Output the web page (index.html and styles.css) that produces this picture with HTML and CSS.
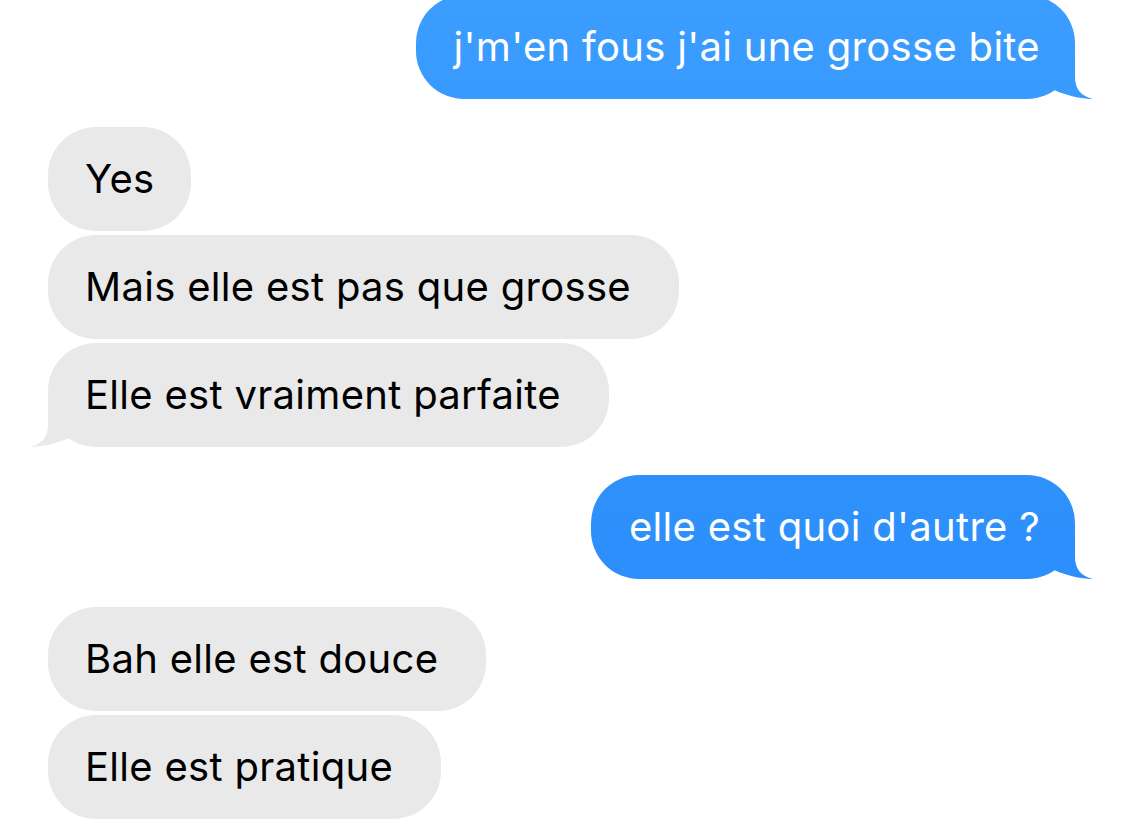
FILE: index.html
```html
<!DOCTYPE html>
<html lang="fr">
<head>
<meta charset="utf-8">
<title>Messages</title>
<link rel="stylesheet" href="styles.css">
</head>
<body>
<main class="thread">
  <div class="group">
    <div class="bubble sent tailed">j'm'en fous j'ai une grosse bite<span class="tail"></span></div>
  </div>
  <div class="group">
    <div class="bubble received short">Yes</div>
    <div class="bubble received">Mais elle est pas que grosse</div>
    <div class="bubble received tailed">Elle est vraiment parfaite<span class="tail"></span></div>
  </div>
  <div class="group">
    <div class="bubble sent tailed">elle est quoi d'autre ?<span class="tail"></span></div>
  </div>
  <div class="group">
    <div class="bubble received">Bah elle est douce</div>
    <div class="bubble received">Elle est pratique</div>
  </div>
</main>
</body>
</html>
```

FILE: styles.css
```css
html, body {
  margin: 0;
  padding: 0;
  background: #ffffff;
}

body {
  width: 1125px;
  height: 822px;
  overflow: hidden;
  font-family: "Inter", "Roboto", "Liberation Sans", sans-serif;
}

.thread {
  display: flex;
  flex-direction: column;
  gap: 28px;
  margin-top: -5px;
}

.group {
  display: flex;
  flex-direction: column;
  gap: 4px;
}

.bubble {
  position: relative;
  font-size: 40px;
  line-height: 48px;
  border-radius: 48px;
  white-space: nowrap;
  letter-spacing: 0.3px;
}

.sent {
  align-self: flex-end;
  margin-right: 50px;
  padding: 28px 35px 28px 38px;
  color: #ffffff;
  background: linear-gradient(to bottom, #3b9dfe 0px, #2b8efb 600px, #2385fa 822px) fixed;
}

.received {
  align-self: flex-start;
  margin-left: 48px;
  padding: 28px 48px 28px 37px;
  color: #000000;
  background: #e9e9e9;
}

.received.short {
  padding-right: 37px;
}

.tail {
  position: absolute;
  bottom: 0;
  width: 44px;
  height: 45px;
}

.sent .tail {
  right: -19px;
  background: linear-gradient(to bottom, #3b9dfe 0px, #2b8efb 600px, #2385fa 822px) fixed;
  clip-path: path("M0,0 L25,0 L25,23 C25,35 31,42 43,45 C35,45 20,43 4,36 L0,30 Z");
}

.received .tail {
  left: -19px;
  background: #e9e9e9;
  clip-path: path("M44,0 L19,0 L19,23 C19,35 13,42 1,45 C9,45 24,43 40,36 L44,30 Z");
}
```
